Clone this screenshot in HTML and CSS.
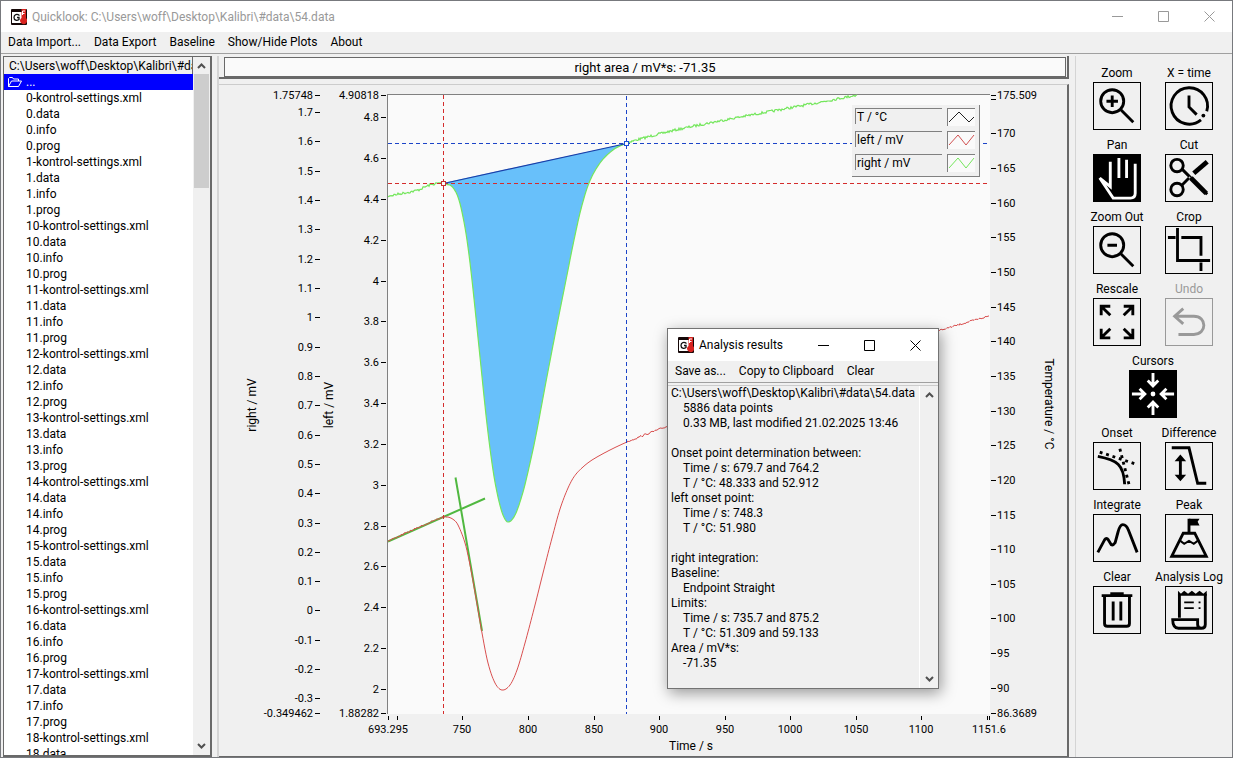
FILE: index.html
```html
<!DOCTYPE html>
<html lang="en">
<head>
<meta charset="utf-8">
<title>Quicklook</title>
<link rel="stylesheet" href="styles.css">
</head>
<body>
<svg class="defs" aria-hidden="true">
  <symbol id="logo" viewBox="0 0 16 16">
    <rect width="16" height="16" rx="1" fill="#150808"/>
    <rect x="1" y="3" width="11" height="11" fill="#fff"/>
    <path d="M8.500 6.500C6 4.500 3 5.500 3 8.500C3 11.500 6 12 8 10.500V8.500H6" fill="none" stroke="#111" stroke-width="1.300"/>
    <path d="M10.500 0h4.500v9a3.500 3.500 0 1 1-5.500 1l1-1z" fill="#d8231f"/>
    <path d="M11.500 6V2H14M11.500 4.500h2" fill="none" stroke="#fff"/>
  </symbol>
  <symbol id="up" viewBox="0 0 9 6"><path d="M1 5l3.500-3.500L8 5" fill="none" stroke="#505050" stroke-width="2"/></symbol>
  <symbol id="down" viewBox="0 0 9 6"><path d="M1 1l3.500 3.500L8 1" fill="none" stroke="#505050" stroke-width="2"/></symbol>
  <symbol id="min" viewBox="0 0 11 11"><path d="M0 5.500h11" stroke="currentColor"/></symbol>
  <symbol id="max" viewBox="0 0 11 11"><path d="M.5 .5h10v10h-10z" fill="none" stroke="currentColor"/></symbol>
  <symbol id="close" viewBox="0 0 11 11"><path d="M.5 .5l10 10M10.500 .5l-10 10" stroke="currentColor"/></symbol>
</svg>
<div class="app">
  <header class="titlebar">
    <svg class="logo"><use href="#logo"/></svg>
    <h1 class="title">Quicklook: C:\Users\woff\Desktop\Kalibri\#data\54.data</h1>
    <button class="winbtn" aria-label="Minimize"><svg><use href="#min"/></svg></button>
    <button class="winbtn" aria-label="Maximize"><svg><use href="#max"/></svg></button>
    <button class="winbtn" aria-label="Close"><svg><use href="#close"/></svg></button>
  </header>
  <nav class="menubar">
    <button>Data Import...</button><button>Data Export</button><button>Baseline</button><button>Show/Hide Plots</button><button>About</button>
  </nav>
  <main class="workspace">
    <section class="files">
      <div class="filecol">
        <div class="path">C:\Users\woff\Desktop\Kalibri\#data</div>
        <ul class="filelist" id="filelist">
          <li><button class="file selected"><svg class="folder" viewBox="0 0 15 12"><path d="M1.500 10.500v-8l1-1h3l1 1.500h5v2M1.500 10.500l3-5.500h10l-3 5.500z" fill="none" stroke="#fff"/></svg>...</button></li>
        </ul>
      </div>
      <div class="scroll"><svg><use href="#up"/></svg><div class="track"><div class="thumb"></div></div><svg><use href="#down"/></svg></div>
    </section>
    <section class="center">
      <div class="readout"><input aria-label="Analysis result" value="right area / mV*s: -71.35" readonly></div>
      <div class="chart">
        <svg class="plot" viewBox="219 85 848 671" role="img" aria-label="right, left and temperature signals over time">
          <rect x="387" y="94" width="603" height="620" fill="#fafafa"/>
          <path class="frame" d="M387.500 714V94.500H990"/>
          <g id="ticks"></g>
          <text class="name" transform="translate(256 405) rotate(-90)">right / mV</text>
          <text class="name" transform="translate(333 405) rotate(-90)">left / mV</text>
          <text class="name" transform="translate(1045 404) rotate(90)">Temperature / °C</text>
          <text class="name" x="691" y="750">Time / s</text>
          <g id="curves"></g>
          <path class="cursor red" d="M443.500 95V714M388 183.500H990"/>
          <path class="cursor blue" d="M626.500 96V714M388 143.500H990"/>
          <path d="M443.500 183.500L626.500 143.500" stroke="#1a3fa8" stroke-width="1.200"/>
          <rect x="441.500" y="181.500" width="4" height="4" fill="#fafafa" stroke="#c83030"/>
          <rect x="624.500" y="141.500" width="4" height="4" fill="#fafafa" stroke="#1a50d8"/>
          <rect x="852" y="105" width="127" height="71" fill="#f0f0f0"/>
          <path d="M852 176.500H979.500V105" class="frame"/>
          <g id="legend"></g>
        </svg>
      </div>
    </section>
    <aside class="tools">
      <button class="tool"><span>Zoom</span><svg viewBox="0 0 48 48"><circle cx="19" cy="19" r="12"/><path d="M28 28l13 13M13 19h12M19 13v12"/></svg></button>
      <button class="tool"><span>X = time</span><svg viewBox="0 0 48 48"><path d="M36.500 38.500A19 19 0 1 1 42.500 29.500M24 13v12l8 8"/><circle class="solid" cx="39" cy="34" r="2"/></svg></button>
      <button class="tool on"><span>Pan</span><svg viewBox="0 0 48 48"><path d="M17 7v26L6 24l14 21h18q5 0 5-5V9M26 3v21M34 5v19"/></svg></button>
      <button class="tool"><span>Cut</span><svg viewBox="0 0 48 48"><circle cx="11.500" cy="11" r="6.500"/><circle cx="11.500" cy="36" r="6.500"/><path d="M17 15l26 26M16 32l9-9"/><path d="M29 19L43 7" stroke-width="5"/><path d="M26 24l16 16" stroke-width="5"/><circle cx="24.500" cy="23.500" r=".5" stroke="#fff" stroke-width="1"/></svg></button>
      <button class="tool"><span>Zoom Out</span><svg viewBox="0 0 48 48"><circle cx="19" cy="19" r="12"/><path d="M28 28l13 13M14 19h10"/></svg></button>
      <button class="tool"><span>Crop</span><svg viewBox="0 0 48 48"><path d="M12 1v34h34M2 11h8M16 11h20.500v19M36.500 37v9"/></svg></button>
      <button class="tool"><span>Rescale</span><svg viewBox="0 0 48 48"><path d="M7.500 17V7.500H17M8 8l9 9M31 7.500h9.500V17M40 8l-9 9M7.500 31v9.500H17M8 40l9-9M40.500 31v9.500H31M40 40l-9-9"/></svg></button>
      <button class="tool" disabled><span>Undo</span><svg viewBox="0 0 48 48"><path d="M18 10L9 18l9 8M9 18h20c14 0 14 19 0 19H13"/></svg></button>
      <button class="tool on wide"><span>Cursors</span><svg viewBox="0 0 48 48"><circle class="solid" cx="24" cy="24" r="2.500"/><path d="M24 2v12M18.500 10l5.500 5.500 5.500-5.500M24 46V34M18.500 38l5.500-5.500 5.500 5.500M2 24h12M10 18.500l5.500 5.500-5.500 5.500M46 24H34M38 18.500L32.500 24l5.500 5.500"/></svg></button>
      <button class="tool"><span>Onset</span><svg viewBox="0 0 48 48"><path d="M4 14c20 4 27 8 28 29"/><path stroke-dasharray="3 4" d="M6 9.500l36 12M27 6l10 39"/></svg></button>
      <button class="tool"><span>Difference</span><svg viewBox="0 0 48 48"><path d="M6 5h18l9 37h9"/><path d="M15 15v21"/><path class="solid" d="M9 19l6-7 6 7zM9 33l6 7 6-7z"/></svg></button>
      <button class="tool"><span>Integrate</span><svg viewBox="0 0 48 48"><path d="M4 39l7-13q2-3 4 0l3 5q2 1 4-2l3-11q2-8 5-8 4 0 6 6l9 23"/></svg></button>
      <button class="tool"><span>Peak</span><svg viewBox="0 0 48 48"><path d="M24 18V4M18 19h12l12 24H6z"/><path class="solid" d="M24 4h11l-2 3 2 4H24z"/><path stroke-width="2" d="M15 27l4 3 5-3 5 3 4-3"/></svg></button>
      <button class="tool"><span>Clear</span><svg viewBox="0 0 48 48"><path d="M8 9h32M11 10v28q0 3 3 3h20q3 0 3-3V10M20 15v20M28 15v20"/><path d="M17 7.500h14" stroke-width="4"/></svg></button>
      <button class="tool"><span>Analysis Log</span><svg viewBox="0 0 48 48"><path d="M14 32V7M41 7v32q0 4-4 4H13q-6 0-6-9h26v5q0 4 4 4"/><path class="solid" d="M12.500 4l3 3 3.500-3 4 3 4-3 4 3 4-3 4 3 3.500-3v5h-30z"/><path d="M19 16h10M19 22h10M34 16h2M34 22h2" stroke-width="2"/></svg></button>
    </aside>
  </main>
  <section class="dialog" role="dialog" aria-label="Analysis results">
    <header class="titlebar">
      <svg class="logo"><use href="#logo"/></svg>
      <h2 class="title">Analysis results</h2>
      <button class="winbtn" aria-label="Minimize"><svg><use href="#min"/></svg></button>
      <button class="winbtn" aria-label="Maximize"><svg><use href="#max"/></svg></button>
      <button class="winbtn" aria-label="Close"><svg><use href="#close"/></svg></button>
    </header>
    <nav class="menubar"><button>Save as...</button><button>Copy to Clipboard</button><button>Clear</button></nav>
    <div class="report">
<pre class="log">C:\Users\woff\Desktop\Kalibri\#data\54.data
	5886 data points
	0.33 MB, last modified 21.02.2025 13:46

Onset point determination between:
	Time / s: 679.7 and 764.2
	T / °C: 48.333 and 52.912
left onset point:
	Time / s: 748.3
	T / °C: 51.980

right integration:
Baseline:
	Endpoint Straight
Limits:
	Time / s: 735.7 and 875.2
	T / °C: 51.309 and 59.133
Area / mV*s:
	-71.35</pre>
      <div class="scroll"><svg><use href="#up"/></svg><div class="track"></div><svg><use href="#down"/></svg></div>
    </div>
  </section>
</div>
<script src="app.js"></script>
</body>
</html>
```
FILE: styles.css
```css
* { box-sizing: border-box; }
body { margin: 0; font: 12px/16px Roboto, "Open Sans", sans-serif; color: #000; background: #f0f0f0; }
button, input { font: inherit; color: inherit; border: 0; padding: 0; margin: 0; background: none; }
.defs { position: absolute; width: 0; height: 0; }
.app { position: relative; height: 100vh; display: flex; flex-direction: column; border: 1px solid #77797d; overflow: hidden; }
.titlebar { flex: none; height: 31px; display: flex; align-items: center; background: #fff; color: #999; padding-left: 10px; }
.logo { width: 16px; height: 16px; flex: none; }
.title { flex: 1; margin: 0 0 0 5px; font-size: 12px; font-weight: 400; white-space: nowrap; }
.winbtn { width: 46px; height: 31px; display: grid; place-items: center; flex: none; }
.winbtn svg { width: 11px; height: 11px; }
.menubar { flex: none; display: flex; gap: 13px; height: 22px; padding: 0 7px; border-bottom: 1px solid #a0a0a0; white-space: nowrap; }
.menubar button { height: 19px; }
.workspace { flex: 1; min-height: 0; display: flex; padding: 2px 0 0 2px; }

.files { flex: none; width: 209px; display: flex; border: solid #696969; border-width: 1px 2px 2px 1px; background: #fff; }
.filecol { flex: 1; min-width: 0; display: flex; flex-direction: column; }
.path { flex: none; height: 17px; line-height: 18px; padding-left: 5px; background: #f0f0f0; border-right: 1px solid #696969; white-space: nowrap; overflow: hidden; }
.filelist { flex: 1; min-height: 0; overflow: hidden; list-style: none; margin: 0; padding: 0; }
.file { display: flex; align-items: center; width: 100%; height: 16px; padding-left: 22px; }
.file.selected { background: #00f; color: #fff; padding-left: 3px; gap: 4px; }
.folder { width: 15px; height: 12px; }
.scroll { flex: none; width: 17px; display: flex; flex-direction: column; align-items: center; background: #f0f0f0; padding: 6px 0; }
.scroll svg { width: 9px; height: 6px; flex: none; }
.track { flex: 1; width: 15px; padding-top: 5px; }
.thumb { height: 17%; background: #cdcdcd; }

.center { flex: 1; min-width: 0; display: flex; flex-direction: column; margin-left: 5px; border-left: 2px solid #d4d4d4; }
.readout { flex: none; height: 23px; padding: 1px 1px 1px 5px; border: solid #696969; border-width: 0 2px 2px 0; }
.readout input { width: 100%; height: 20px; text-align: center; font-size: 13px; background: #fafafa; border: 1px solid #696969; display: block; }
.chart { flex: 1; min-height: 0; margin-top: 5px; border: solid #696969; border-width: 1px 2px 1px 0; border-top-color: #ccc; }
.plot { width: 100%; height: 100%; display: block; }
.plot text { font-size: 12px; }
#ticks text { font-size: 11px; }
.plot .name { text-anchor: middle; }
.frame { fill: none; stroke: #808080; shape-rendering: crispEdges; }
.tick { stroke: #000; shape-rendering: crispEdges; }
.cursor { fill: none; stroke-dasharray: 4 3; }
.red { stroke: #d42c2c; }
.blue { stroke: #1c44c8; }

.tools { flex: none; width: 157px; margin-left: 6px; padding: 9px 7px 0 5px; border-left: 1px solid #d4d4d4; display: grid; grid-template-columns: 72px 72px; grid-auto-rows: 72px; }
.tool { display: flex; flex-direction: column; align-items: center; white-space: nowrap; }
.tool span { height: 17px; }
.tool svg { width: 48px; height: 48px; border: 1px solid currentColor; fill: none; stroke: currentColor; stroke-width: 3; flex: none; }
.tool .solid { fill: currentColor; stroke-width: 0; }
.tool:disabled { color: #999; }
.tool.on svg { background: #000; border-color: #000; stroke: #fff; }
.tool.on .solid { fill: #fff; }
.wide { grid-column: 1 / 3; }

.dialog { position: absolute; left: 666px; top: 327px; width: 272px; border: 1px solid #737373; background: #f0f0f0; box-shadow: 2px 4px 14px rgba(0,0,0,.4); }
.dialog .titlebar { color: #000; height: 32px; }
.report { display: flex; margin-top: 2px; border-top: 1px solid #ccc; height: 303px; }
.log { flex: 1; min-width: 0; margin: 0; padding: 0 3px; font: 12px/15px Roboto, "Open Sans", sans-serif; tab-size: 12px; overflow: hidden; }
.report .scroll { width: 19px; border-left: 1px solid #fff; }
```
FILE: app.js
```js
const NS = 'http://www.w3.org/2000/svg';
const list = document.getElementById('filelist');
['0', '1', '10', '11', '12', '13', '14', '15', '16', '17', '18'].forEach(n => {
  ['-kontrol-settings.xml', '.data', '.info', '.prog'].forEach(s => {
    if (n === '18' && (s === '.info' || s === '.prog')) return;
    const li = document.createElement('li');
    const b = document.createElement('button');
    b.className = 'file';
    b.textContent = n + s;
    li.append(b);
    list.append(li);
  });
});

function add(parent, tag, attrs, text) {
  const el = document.createElementNS(NS, tag);
  for (const k in attrs) el.setAttribute(k, attrs[k]);
  if (text !== undefined) el.textContent = text;
  parent.append(el);
}

const ticks = document.getElementById('ticks');
const TOP = 95.5, BOTTOM = 713.5;
function verticalAxis(min, max, values, x, anchor, textX) {
  [max, ...values, min].forEach(v => {
    const y = Math.round(TOP - .5 + (max - v) / (max - min) * (BOTTOM - TOP));
    add(ticks, 'path', { class: 'tick', d: `M${x} ${y + .5}h5` });
    if (v !== 175) add(ticks, 'text', { x: textX, y: y + 4, 'text-anchor': anchor }, v);
  });
}
const range = (from, to, step) => {
  const out = [];
  for (let i = 0; from + i * step <= to + step / 2; i++) out.push(+(from + i * step).toFixed(1));
  return out;
};
verticalAxis(-0.349462, 1.75748, range(-0.3, 1.7, 0.1), 315, 'end', 313);
verticalAxis(1.88282, 4.90818, range(2, 4.8, 0.2), 381, 'end', 379);
verticalAxis(86.3689, 175.509, range(90, 175, 5), 991, 'start', 997);
[693.295, 700, 750, 800, 850, 900, 950, 1000, 1050, 1100, 1150, 1151.6].forEach(v => {
  const x = Math.round(388 + (v - 693.295) * 1.3114);
  add(ticks, 'path', { class: 'tick', d: `M${x + .5} 716v4` });
  if (v !== 700 && v !== 1150) add(ticks, 'text', { x, y: 733, 'text-anchor': 'middle' }, v);
});

// Catmull-Rom sampling; noise is added only on the flat stretches.
let seed = 7;
const rnd = () => (seed = (seed * 16807) % 2147483647) / 2147483647 - .5;
function curve(p, noise) {
  const out = [];
  for (let i = 0; i < p.length - 1; i++) {
    const a = p[Math.max(i - 1, 0)], b = p[i], c = p[i + 1], d = p[Math.min(i + 2, p.length - 1)];
    const n = Math.max(2, Math.round(c[0] - b[0]));
    const k = (c[0] - b[0]);
    const m1 = i ? (c[1] - a[1]) / (c[0] - a[0]) * k : c[1] - b[1];
    const m2 = i < p.length - 2 ? (d[1] - b[1]) / (d[0] - b[0]) * k : c[1] - b[1];
    const flat = Math.abs((c[1] - b[1]) / k) < .5;
    for (let j = 0; j < n; j++) {
      const t = j / n, t2 = t * t, t3 = t2 * t;
      const y = (2 * t3 - 3 * t2 + 1) * b[1] + (t3 - 2 * t2 + t) * m1 + (3 * t2 - 2 * t3) * c[1] + (t3 - t2) * m2;
      out.push([b[0] + k * t, y + (flat ? rnd() * noise : 0)]);
    }
  }
  out.push(p[p.length - 1]);
  return out.map(q => q[0].toFixed(1) + ' ' + q[1].toFixed(1)).join('L');
}
const curves = document.getElementById('curves');
const dip = [[443, 183], [450, 185], [454, 189], [458, 197], [462, 212], [467, 240], [472, 280], [480, 357], [487, 424], [493, 470], [498, 497], [503, 515], [508, 522], [515, 515], [523, 492], [530, 463], [536, 435], [545, 387], [555, 335], [566, 280], [574, 240], [581, 209], [589, 183], [600, 163], [613, 150], [626, 143.5]];
add(curves, 'path', { d: 'M' + curve(dip, 0) + 'Z', fill: '#68c0fa' });
const green = [[388, 196], [404, 193], [418, 190], [430, 185], ...dip, [640, 139], [680, 129], [740, 117], [800, 106], [857, 95]];
add(curves, 'path', { d: 'M' + curve(green, 2.4), fill: 'none', stroke: '#74e65c', 'stroke-width': 1.2 });
add(curves, 'path', { d: 'M388 541.500L485 498.500M455.500 477.500L482 631', stroke: '#50b840', 'stroke-width': 2, fill: 'none' });
const red = [[388, 541], [443, 517], [448, 517], [454, 520], [458, 525], [465, 543], [470, 565], [476, 598], [482, 633], [488, 663], [495, 683], [502, 690], [510, 685], [517, 670], [525, 643], [535, 605], [543, 573], [552, 538], [561, 506], [572, 480], [583, 467], [597, 457], [627, 442], [668, 426], [800, 375], [938, 331], [989, 316]];
add(curves, 'path', { d: 'M' + curve(red, 1.8), fill: 'none', stroke: '#d94f4f', 'stroke-width': 1 });

const legend = document.getElementById('legend');
[['T / °C', '#222'], ['left / mV', '#d05050'], ['right / mV', '#74e65c']].forEach(([name, color], i) => {
  const y = 108 + i * 23;
  add(legend, 'path', { class: 'frame', d: `M855.500 ${y + 16}v-15.500H942` });
  add(legend, 'text', { x: 857, y: y + 13 }, name);
  add(legend, 'rect', { x: 948, y: y + 1, width: 27, height: 17, fill: '#fafafa' });
  add(legend, 'path', { class: 'frame', d: `M947.500 ${y + 18}v-17.500H975` });
  add(legend, 'path', { d: i ? `M949 ${y + 14}l9-10 8 10 8-10` : `M949 ${y + 14}l10-10 10 10 5-5`, fill: 'none', stroke: color });
});
```
